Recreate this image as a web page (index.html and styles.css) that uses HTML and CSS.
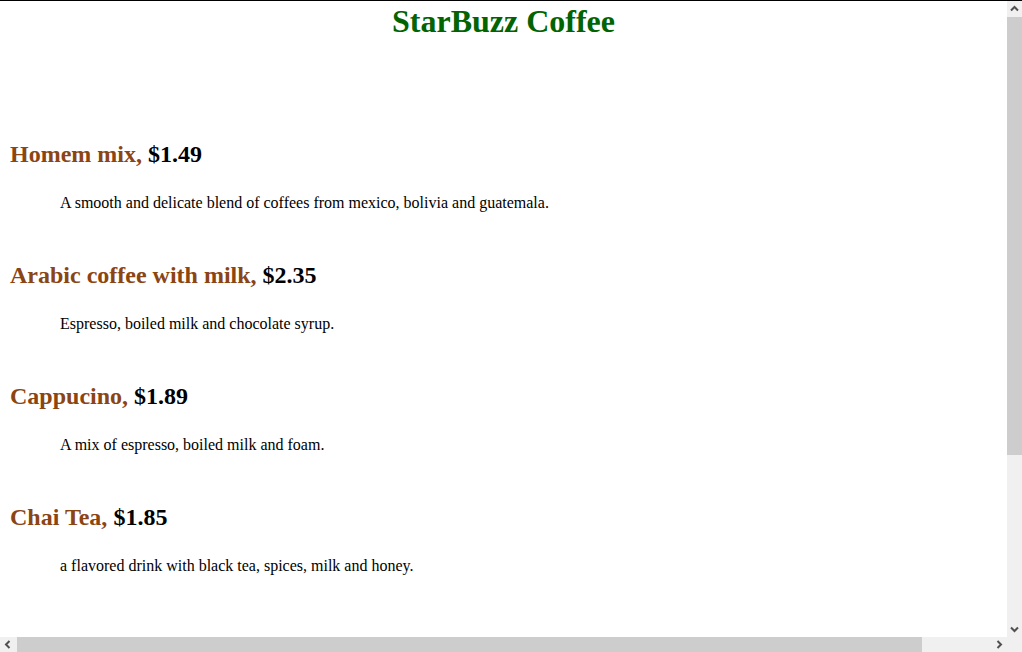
FILE: index.html
```html
<!DOCTYPE html>
<html>
<head>
<meta charset="utf-8">
<title>StarBuzz Coffee</title>
<link rel="stylesheet" href="styles.css">
</head>
<body>
<div class="frame">
  <main class="content">
    <h1 class="title">StarBuzz Coffee</h1>
    <section class="menu">
      <article class="item">
        <h2 class="item-name">Homem mix, <span class="price">$1.49</span></h2>
        <p class="item-desc">A smooth and delicate blend of coffees from mexico, bolivia and guatemala.</p>
      </article>
      <article class="item">
        <h2 class="item-name">Arabic coffee with milk, <span class="price">$2.35</span></h2>
        <p class="item-desc">Espresso, boiled milk and chocolate syrup.</p>
      </article>
      <article class="item">
        <h2 class="item-name">Cappucino, <span class="price">$1.89</span></h2>
        <p class="item-desc">A mix of espresso, boiled milk and foam.</p>
      </article>
      <article class="item">
        <h2 class="item-name">Chai Tea, <span class="price">$1.85</span></h2>
        <p class="item-desc">a flavored drink with black tea, spices, milk and honey.</p>
      </article>
    </section>
  </main>
  <div class="vscroll">
    <div class="sb-btn"><svg width="15" height="15" viewBox="0 0 15 15"><path d="M4 9.5 L7.5 6 L11 9.5" fill="none" stroke="#505050" stroke-width="2"/></svg></div>
    <div class="vtrack"><div class="vthumb"></div></div>
    <div class="sb-btn"><svg width="15" height="15" viewBox="0 0 15 15"><path d="M4 5.5 L7.5 9 L11 5.5" fill="none" stroke="#505050" stroke-width="2"/></svg></div>
  </div>
  <div class="hscroll">
    <div class="sb-btn"><svg width="15" height="15" viewBox="0 0 15 15"><path d="M9.5 4 L6 7.5 L9.5 11" fill="none" stroke="#505050" stroke-width="2"/></svg></div>
    <div class="htrack"><div class="hthumb"></div></div>
    <div class="sb-btn"><svg width="15" height="15" viewBox="0 0 15 15"><path d="M5.5 4 L9 7.5 L5.5 11" fill="none" stroke="#505050" stroke-width="2"/></svg></div>
  </div>
  <div class="corner"></div>
</div>
</body>
</html>
```
FILE: styles.css
```css
html, body {
  margin: 0;
  padding: 0;
  background: #fff;
}
body {
  font-family: "Liberation Serif", "Times New Roman", serif;
  overflow: hidden;
}
.frame {
  width: 1022px;
  height: 652px;
  box-sizing: border-box;
  border-top: 1px solid #000;
  display: grid;
  grid-template-columns: 1007px 15px;
  grid-template-rows: 636px 15px;
  overflow: hidden;
}
.content {
  overflow: hidden;
  padding: 2px 10px 0;
}
.title {
  margin: 0 0 100px;
  text-align: center;
  color: #006400;
  font-size: 32px;
  font-weight: bold;
  line-height: 37px;
}
.item-name {
  margin: 0;
  font-size: 24px;
  line-height: 28px;
  color: #8b4513;
}
.price {
  color: #000;
}
.item-desc {
  margin: 23px 0 46px 50px;
  font-size: 16px;
  line-height: 24px;
  color: #000;
}
.vscroll {
  background: #f0f0f0;
  display: flex;
  flex-direction: column;
}
.sb-btn {
  width: 15px;
  height: 15px;
  flex: none;
  display: flex;
}
.vtrack {
  flex: 1;
  padding: 1px 0;
}
.vthumb {
  height: 438px;
  background: #cdcdcd;
}
.hscroll {
  background: #f0f0f0;
  display: flex;
}
.htrack {
  flex: 1;
  padding: 0 2px;
}
.hthumb {
  width: 905px;
  height: 100%;
  background: #cdcdcd;
}
.corner {
  background: #f0f0f0;
}
```
